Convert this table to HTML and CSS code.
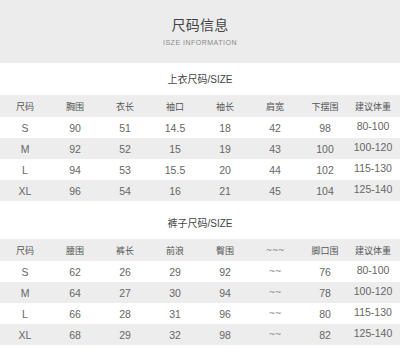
FILE: index.html
```html
<!DOCTYPE html>
<html lang="zh">
<head>
<meta charset="utf-8">
<link rel="stylesheet" href="styles.css">
</head>
<body>
<header class="hero">
  <h1 class="hero-title">尺码信息</h1>
  <p class="hero-sub">ISZE INFORMATION</p>
</header>

<h2 class="section-title">上衣尺码/SIZE</h2>
<div class="table">
  <div class="row head"><span>尺码</span><span>胸围</span><span>衣长</span><span>袖口</span><span>袖长</span><span>肩宽</span><span>下摆围</span><span>建议体重</span></div>
  <div class="row"><span>S</span><span>90</span><span>51</span><span>14.5</span><span>18</span><span>42</span><span>98</span><span class="w">80-100</span></div>
  <div class="row alt"><span>M</span><span>92</span><span>52</span><span>15</span><span>19</span><span>43</span><span>100</span><span class="w">100-120</span></div>
  <div class="row"><span>L</span><span>94</span><span>53</span><span>15.5</span><span>20</span><span>44</span><span>102</span><span class="w">115-130</span></div>
  <div class="row alt"><span>XL</span><span>96</span><span>54</span><span>16</span><span>21</span><span>45</span><span>104</span><span class="w">125-140</span></div>
</div>

<h2 class="section-title second">裤子尺码/SIZE</h2>
<div class="table">
  <div class="row head"><span>尺码</span><span>腰围</span><span>裤长</span><span>前浪</span><span>臀围</span><span class="tilde">~~~</span><span>脚口围</span><span>建议体重</span></div>
  <div class="row"><span>S</span><span>62</span><span>26</span><span>29</span><span>92</span><span class="tilde">~~</span><span>76</span><span class="w">80-100</span></div>
  <div class="row alt"><span>M</span><span>64</span><span>27</span><span>30</span><span>94</span><span class="tilde">~~</span><span>78</span><span class="w">100-120</span></div>
  <div class="row"><span>L</span><span>66</span><span>28</span><span>31</span><span>96</span><span class="tilde">~~</span><span>80</span><span class="w">115-130</span></div>
  <div class="row alt"><span>XL</span><span>68</span><span>29</span><span>32</span><span>98</span><span class="tilde">~~</span><span>82</span><span class="w">125-140</span></div>
</div>
</body>
</html>
```

FILE: styles.css
```css
* { box-sizing: border-box; }
html, body { margin: 0; padding: 0; background: #fff; }
body {
  width: 400px;
  font-family: "Liberation Sans", "Noto Sans CJK SC", sans-serif;
  color: #555;
}
.hero {
  background: #ececec;
  height: 63px;
  padding-top: 16px;
  text-align: center;
}
.hero-title {
  margin: 0;
  font-size: 14px;
  line-height: 18px;
  font-weight: normal;
  color: #444;
  letter-spacing: 0.3px;
}
.hero-sub {
  margin: 4px 0 0;
  font-size: 7px;
  line-height: 10px;
  letter-spacing: 0.5px;
  color: #8a8a8a;
}
.section-title {
  margin: 0;
  padding: 10px 0 8px;
  font-size: 10px;
  line-height: 14px;
  font-weight: normal;
  text-align: center;
  color: #444;
}
.section-title.second { padding-top: 16px; }
.table { display: flex; flex-direction: column; }
.row {
  display: grid;
  grid-template-columns: repeat(8, 50px);
  height: 21px;
  align-items: center;
  text-align: center;
  font-size: 10.5px;
  color: #666;
}
.row.head {
  height: 22px;
  background: #ededed;
  font-size: 9px;
  color: #555;
}
.row.alt { background: #ededed; }
.row .w { margin-left: -4px; margin-top: -3px; }
.row.head span:last-child { margin-left: -4px; }
.tilde {
  font-family: "DejaVu Sans", sans-serif;
  font-size: 8px;
  letter-spacing: -0.5px;
  color: #888;
}
```
